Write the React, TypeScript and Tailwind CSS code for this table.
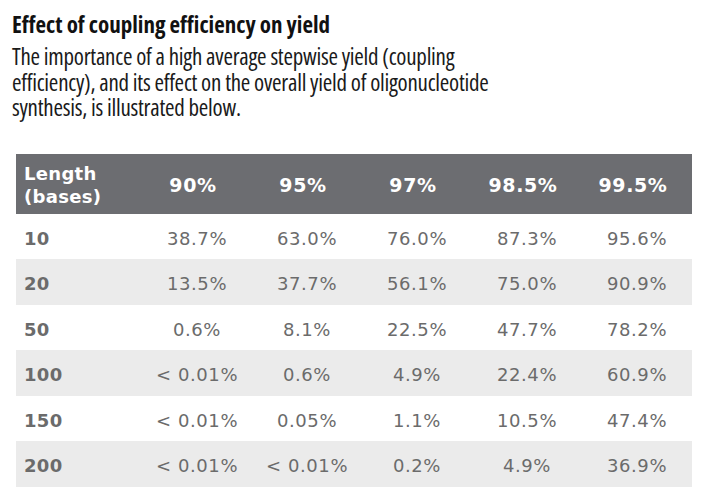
const rows: [string, string[]][] = [
  ["10", ["38.7%", "63.0%", "76.0%", "87.3%", "95.6%"]],
  ["20", ["13.5%", "37.7%", "56.1%", "75.0%", "90.9%"]],
  ["50", ["0.6%", "8.1%", "22.5%", "47.7%", "78.2%"]],
  ["100", ["< 0.01%", "0.6%", "4.9%", "22.4%", "60.9%"]],
  ["150", ["< 0.01%", "0.05%", "1.1%", "10.5%", "47.4%"]],
  ["200", ["< 0.01%", "< 0.01%", "0.2%", "4.9%", "36.9%"]],
];

const heads = ["90%", "95%", "97%", "98.5%", "99.5%"];

export default function App() {
  return (
    <div className="w-[716px] h-[504px] bg-white overflow-hidden">
      <div
        className="pl-[12px] pt-[11px]"
        style={{ fontFamily: "'Open Sans', sans-serif", fontStretch: "75%" }}
      >
        <h1 className="text-[23px] leading-[26px] font-bold text-[#111111]">
          Effect of coupling efficiency on yield
        </h1>
        <p className="mt-[7px] text-[23px] leading-[25.5px] tracking-[-0.25px] text-[#1a1a1a] w-[690px]">
          The importance of a high average stepwise yield (coupling
          <br />
          efficiency), and its effect on the overall yield of oligonucleotide
          <br />
          synthesis, is illustrated below.
        </p>
      </div>
      <div
        className="ml-[16px] mt-[33px] w-[676px]"
        style={{ fontFamily: "'DejaVu Sans', Verdana, sans-serif" }}
      >
        <div className="grid grid-cols-[126px_repeat(5,110px)] h-[60px] bg-[#6c6d71] text-white font-bold">
          <div className="flex items-center pl-[8px] pt-[2px] text-[18px] leading-[23px] tracking-[0.3px]">
            Length
            <br />
            (bases)
          </div>
          {heads.map((h) => (
            <div
              key={h}
              className="flex items-center justify-center pr-[8px] pt-[3px] text-[19px] tracking-[0.6px]"
            >
              {h}
            </div>
          ))}
        </div>
        {rows.map(([len, vals], i) => (
          <div
            key={len}
            className={
              "grid grid-cols-[126px_repeat(5,110px)] h-[45.5px] text-[18px] text-[#6b6b6b] " +
              (i % 2 === 1 ? "bg-[#ebebeb]" : "bg-white")
            }
          >
            <div className="flex items-center pl-[8px] pt-[4px] font-bold tracking-[0.3px] text-[#6b6b6b]">
              {len}
            </div>
            {vals.map((v, j) => (
              <div
                key={j}
                className="flex items-center justify-center pt-[4px] whitespace-nowrap tracking-[0.6px]"
              >
                {v}
              </div>
            ))}
          </div>
        ))}
      </div>
    </div>
  );
}
